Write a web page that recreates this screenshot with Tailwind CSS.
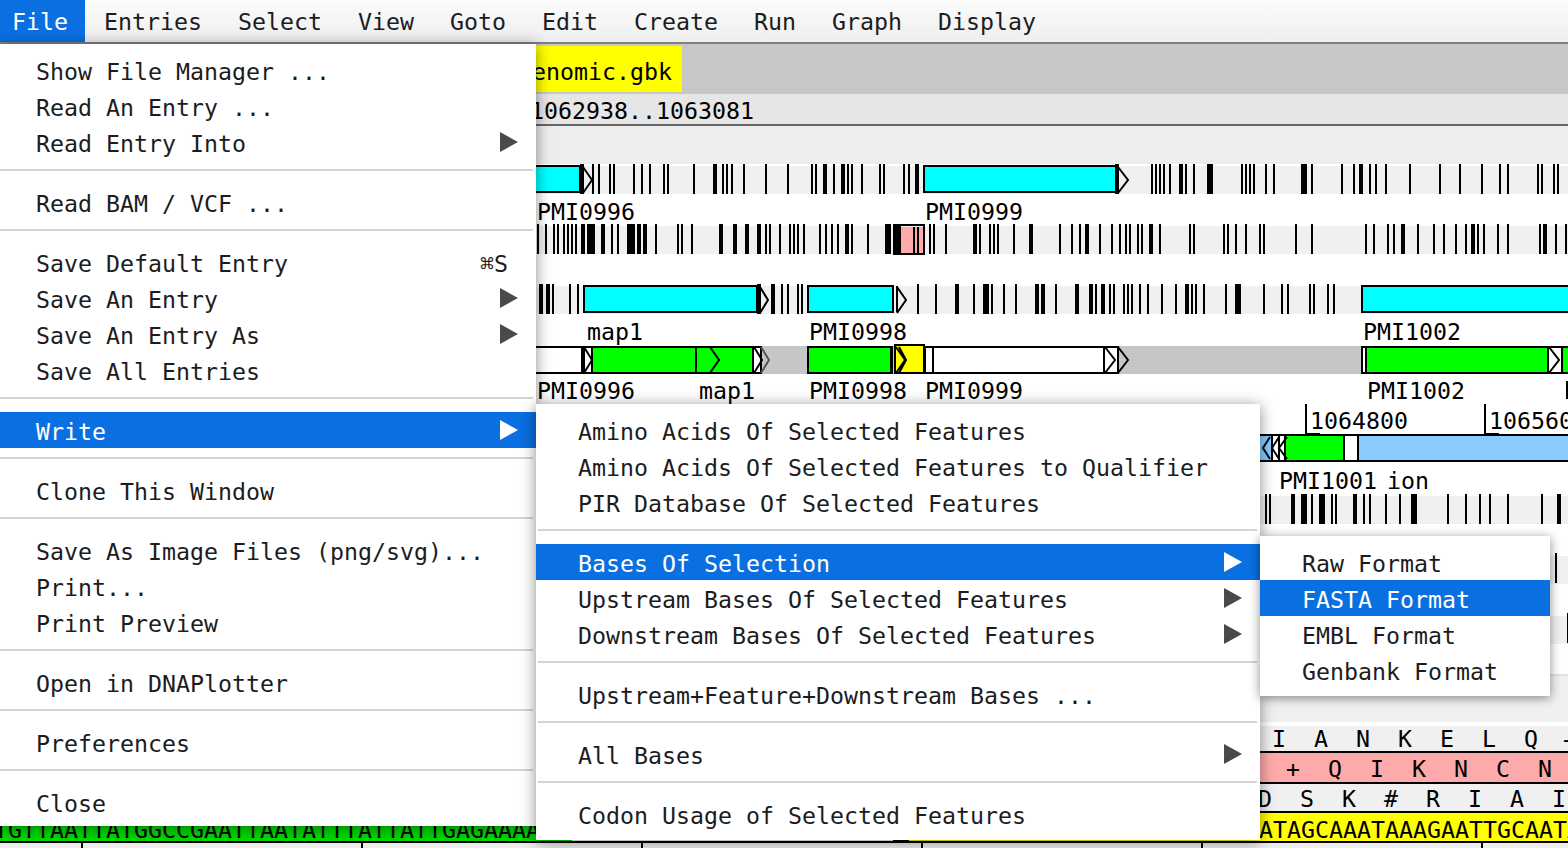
<!DOCTYPE html>
<html lang="en">
<head>
    <meta charset="UTF-8">
    <script src="https://cdn.jsdelivr.net/npm/@tailwindcss/browser@4"></script>
    <title>Artemis</title>
</head>
<body class="bg-white">
<div class="relative w-[1568px] h-[848px] overflow-hidden flex flex-col font-['DejaVu_Sans_Mono',monospace] text-[23.25px] leading-none text-[#1c1c1c]">

    <!-- Menu bar -->
    <nav class="h-[44px] shrink-0 flex border-b-2 border-[#808080] bg-gradient-to-b from-[#fcfcfc] to-[#eeeeee]">
        <div class="flex items-center pt-0.5 pl-3 pr-[17px] bg-[#0a6fe0] text-white">File</div>
        <div class="flex items-center pt-0.5 gap-9 pl-[19px]">
            <span>Entries</span><span>Select</span><span>View</span><span>Goto</span><span>Edit</span><span>Create</span><span>Run</span><span>Graph</span><span>Display</span>
        </div>
    </nav>

    <!-- Entry bar -->
    <div class="h-[50px] shrink-0 pt-0.5 bg-[#c7c7c7]">
        <div class="w-[682px] h-[46px] bg-[#ffff00] flex items-center justify-end pr-[10px] pt-1.5 text-black">genomic.gbk</div>
    </div>

    <!-- Selection info -->
    <div class="h-[32px] shrink-0 bg-[#e6e6e6] border-b-2 border-[#666666] pl-[530px] pt-[5px] text-black">1062938..1063081</div>

    <!-- Feature display -->
    <svg class="block shrink-0" width="1568" height="722" viewBox="0 126 1568 722" font-size="23.25" fill="#000">
        <rect x="0" y="126" width="1568" height="38" fill="#ededed"/>
        <rect x="0" y="166" width="1568" height="28" fill="#f0f0f0"/>
        <rect x="0" y="226" width="1568" height="28" fill="#f0f0f0"/>
        <rect x="0" y="286" width="1568" height="28" fill="#f0f0f0"/>
        <rect x="536" y="346" width="1032" height="28" fill="#c6c6c6"/>
        <rect x="1260" y="496" width="308" height="28" fill="#f0f0f0"/>
        <rect x="1260" y="556" width="308" height="28" fill="#f0f0f0"/>
        <rect x="1260" y="616" width="308" height="28" fill="#f0f0f0"/>
        <rect x="1260" y="674" width="308" height="2" fill="#e2e2e2"/>
        <rect x="1260" y="676" width="308" height="46" fill="#f0f0f0"/>
        <g id="ticks"></g>

        <!-- Forward frame features -->
        <g stroke="#000" stroke-width="2" fill="none">
            <rect x="530" y="166" width="50" height="26" fill="#00ffff"/>
            <rect x="924" y="166" width="192" height="26" fill="#00ffff"/>
            <rect x="584" y="286" width="173" height="26" fill="#00ffff"/>
            <rect x="808" y="286" width="85" height="26" fill="#00ffff"/>
            <path d="M893 286v26M897 286v26"/>
            <rect x="1362" y="286" width="210" height="26" fill="#00ffff"/>
            <path d="M581 164v30M583 164v30M1116 164v30M1118 164v30M758 284v30M760 284v30"/>
            <path d="M583 167l9 13-9 13M1118 167l10 13-10 13M760 287l8 13-8 13M897 287l9 13-9 13"/>

            <!-- Gene row -->
            <rect x="530" y="347" width="53" height="26" fill="#fff"/>
            <rect x="582" y="347" width="11" height="26" fill="#fff"/>
            <rect x="592" y="347" width="104" height="26" fill="#00ff00"/>
            <rect x="696" y="347" width="57" height="26" fill="#00ff00"/>
            <rect x="753" y="347" width="8" height="26" fill="#fff"/>
            <rect x="808" y="347" width="83" height="26" fill="#00ff00"/>
            <rect x="925" y="347" width="179" height="26" fill="#fff"/>
            <rect x="1104" y="347" width="14" height="26" fill="#fff"/>
            <rect x="1362" y="347" width="5" height="26" fill="#fff"/>
            <rect x="1366" y="347" width="182" height="26" fill="#00ff00"/>
            <rect x="1548" y="347" width="14" height="26" fill="#fff"/>
            <rect x="1562" y="347" width="10" height="26" fill="#00ff00"/>
            <path d="M584 347l8 13-8 13M710 347l9 13-9 13M754 347l8 13-8 13M1105 347l10 13-10 13M1118 347l10 13-10 13M1549 347l10 13-10 13"/>
            <path d="M761 347l8 13-8 13" stroke="#555"/>
            <path d="M583 346v28M584 346v28M933 346v28M892 346v28M895 346v28"/>

            <!-- Selected feature -->
            <rect x="895" y="345" width="29" height="28" fill="#ffff00"/>
            <path d="M896 347l9 13-9 13M899 347l7 13-7 13"/>
            <rect x="894" y="225" width="30" height="29" fill="none"/>

            <!-- Reverse frame features -->
            <path d="M1260 435H1568M1260 461H1568"/>
            <rect x="1258" y="435" width="14" height="26" fill="#88ccff"/>
            <rect x="1272" y="435" width="13" height="26" fill="#fff"/>
            <rect x="1285" y="435" width="59" height="26" fill="#00ff00"/>
            <rect x="1344" y="435" width="14" height="26" fill="#fff"/>
            <rect x="1358" y="435" width="214" height="26" fill="#88ccff"/>
            <path d="M1270 437l-7 11 7 11M1279 437l-7 11 7 11M1287 437l-8 11 8 11M1279 436v24"/>
        </g>
        <rect x="901" y="227" width="12" height="26" fill="#ffaaaa"/>
        <rect x="913" y="227" width="2" height="26"/>
        <rect x="915" y="227" width="2" height="26" fill="#ffaaaa"/>
        <rect x="917" y="227" width="2" height="26"/>
        <rect x="919" y="227" width="4" height="26" fill="#ffaaaa"/>
        <rect x="895" y="226" width="6" height="27"/>

        <!-- Labels -->
        <text y="220" x="537">PMI0996</text>
        <text y="220" x="925">PMI0999</text>
        <text y="340" x="587">map1</text>
        <text y="340" x="809">PMI0998</text>
        <text y="340" x="1363">PMI1002</text>
        <text y="399" x="537">PMI0996</text>
        <text y="399" x="699">map1</text>
        <text y="399" x="809">PMI0998</text>
        <text y="399" x="925">PMI0999</text>
        <text y="399" x="1367">PMI1002</text>
        <rect x="1566" y="381" width="2" height="18"/>
        <text y="489" x="1279">PMI1001</text>
        <text y="489" x="1387">ion</text>

        <!-- Ruler -->
        <rect x="1305" y="404" width="2" height="31"/>
        <rect x="1305" y="433" width="15" height="2"/>
        <text y="429" x="1310">1064800</text>
        <rect x="1484" y="404" width="2" height="31"/>
        <rect x="1484" y="433" width="15" height="2"/>
        <text y="429" x="1489">1065600</text>

        <rect x="1555" y="553" width="2" height="30"/>
        <rect x="1567" y="613" width="1" height="30"/>

        <!-- Sequence view -->
        <rect x="0" y="726" width="1568" height="25" fill="#f0f0f0"/>
        <rect x="0" y="751" width="1568" height="2"/>
        <rect x="0" y="753" width="1568" height="29" fill="#ffaaaa"/>
        <rect x="0" y="782" width="1568" height="2"/>
        <rect x="0" y="784" width="1568" height="27" fill="#f0f0f0"/>
        <rect x="0" y="811" width="1568" height="2"/>
        <text y="747" text-anchor="middle" x="1279 1321 1363 1405 1447 1489 1531 1567">IANKELQ-</text>
        <text y="777" text-anchor="middle" x="1293 1335 1377 1419 1461 1503 1545">+QIKNCN</text>
        <text y="807" text-anchor="middle" x="1265 1307 1349 1391 1433 1475 1517 1559">DSK#RIAI</text>
        <rect x="0" y="813" width="572" height="28" fill="#00d900"/>
        <rect x="909" y="813" width="659" height="28" fill="#ffff00"/>
        <text y="838" x="-6">TGTTAATTATGGCCGAATTAATATTTATTATTGAGAAAA</text>
        <text y="838" x="1259">ATAGCAAATAAAGAATTGCAATA</text>
        <rect x="0" y="841" width="1568" height="2"/>
        <rect x="893" y="840" width="16" height="2"/>
        <rect x="0" y="843" width="1568" height="5" fill="#eeeeee"/>
        <path d="M82 843v5M362 843v5M642 843v5M922 843v5M1202 843v5M1482 843v5" stroke="#000" stroke-width="2"/>
    </svg>

    <!-- File menu -->
    <div class="absolute left-0 top-[44px] w-[536px] h-[782px] pt-2 bg-white shadow-[0_2px_14px_rgba(0,0,0,0.45)]">
        <div class="h-9 flex items-center pt-1 pl-9">Show File Manager ...</div>
        <div class="h-9 flex items-center pt-1 pl-9">Read An Entry ...</div>
        <div class="h-9 flex items-center pt-1 justify-between pl-9 pr-[18px]">Read Entry Into
            <svg class="-mt-1" width="18" height="20" viewBox="0 0 18 20"><path d="M0 0L18 10L0 20Z" fill="#4a4a4a"/></svg>
        </div>
        <div class="h-6 pt-[9px] pr-[3px]"><div class="h-0.5 bg-[#d4d4d4]"></div></div>
        <div class="h-9 flex items-center pt-1 pl-9">Read BAM / VCF ...</div>
        <div class="h-6 pt-[9px] pr-[3px]"><div class="h-0.5 bg-[#d4d4d4]"></div></div>
        <div class="h-9 flex items-center pt-1 justify-between pl-9 pr-7">Save Default Entry<span>⌘S</span></div>
        <div class="h-9 flex items-center pt-1 justify-between pl-9 pr-[18px]">Save An Entry
            <svg class="-mt-1" width="18" height="20" viewBox="0 0 18 20"><path d="M0 0L18 10L0 20Z" fill="#4a4a4a"/></svg>
        </div>
        <div class="h-9 flex items-center pt-1 justify-between pl-9 pr-[18px]">Save An Entry As
            <svg class="-mt-1" width="18" height="20" viewBox="0 0 18 20"><path d="M0 0L18 10L0 20Z" fill="#4a4a4a"/></svg>
        </div>
        <div class="h-9 flex items-center pt-1 pl-9">Save All Entries</div>
        <div class="h-6 pt-[9px] pr-[3px]"><div class="h-0.5 bg-[#d4d4d4]"></div></div>
        <div class="h-9 flex items-center pt-1 justify-between pl-9 pr-[18px] bg-[#0a6fe0] text-white">Write
            <svg class="-mt-1" width="18" height="20" viewBox="0 0 18 20"><path d="M0 0L18 10L0 20Z" fill="#fff"/></svg>
        </div>
        <div class="h-6 pt-[9px] pr-[3px]"><div class="h-0.5 bg-[#d4d4d4]"></div></div>
        <div class="h-9 flex items-center pt-1 pl-9">Clone This Window</div>
        <div class="h-6 pt-[9px] pr-[3px]"><div class="h-0.5 bg-[#d4d4d4]"></div></div>
        <div class="h-9 flex items-center pt-1 pl-9">Save As Image Files (png/svg)...</div>
        <div class="h-9 flex items-center pt-1 pl-9">Print...</div>
        <div class="h-9 flex items-center pt-1 pl-9">Print Preview</div>
        <div class="h-6 pt-[9px] pr-[3px]"><div class="h-0.5 bg-[#d4d4d4]"></div></div>
        <div class="h-9 flex items-center pt-1 pl-9">Open in DNAPlotter</div>
        <div class="h-6 pt-[9px] pr-[3px]"><div class="h-0.5 bg-[#d4d4d4]"></div></div>
        <div class="h-9 flex items-center pt-1 pl-9">Preferences</div>
        <div class="h-6 pt-[9px] pr-[3px]"><div class="h-0.5 bg-[#d4d4d4]"></div></div>
        <div class="h-9 flex items-center pt-1 pl-9">Close</div>
    </div>

    <!-- Write submenu -->
    <div class="absolute left-[536px] top-[404px] w-[724px] h-[436px] pt-2 bg-white shadow-[0_2px_14px_rgba(0,0,0,0.45)]">
        <div class="h-9 flex items-center pt-1 pl-[42px]">Amino Acids Of Selected Features</div>
        <div class="h-9 flex items-center pt-1 pl-[42px]">Amino Acids Of Selected Features to Qualifier</div>
        <div class="h-9 flex items-center pt-1 pl-[42px]">PIR Database Of Selected Features</div>
        <div class="h-6 pt-[9px] pl-0.5 pr-[3px]"><div class="h-0.5 bg-[#d4d4d4]"></div></div>
        <div class="h-9 flex items-center pt-1 justify-between pl-[42px] pr-[18px] bg-[#0a6fe0] text-white">Bases Of Selection
            <svg class="-mt-1" width="18" height="20" viewBox="0 0 18 20"><path d="M0 0L18 10L0 20Z" fill="#fff"/></svg>
        </div>
        <div class="h-9 flex items-center pt-1 justify-between pl-[42px] pr-[18px]">Upstream Bases Of Selected Features
            <svg class="-mt-1" width="18" height="20" viewBox="0 0 18 20"><path d="M0 0L18 10L0 20Z" fill="#4a4a4a"/></svg>
        </div>
        <div class="h-9 flex items-center pt-1 justify-between pl-[42px] pr-[18px]">Downstream Bases Of Selected Features
            <svg class="-mt-1" width="18" height="20" viewBox="0 0 18 20"><path d="M0 0L18 10L0 20Z" fill="#4a4a4a"/></svg>
        </div>
        <div class="h-6 pt-[9px] pl-0.5 pr-[3px]"><div class="h-0.5 bg-[#d4d4d4]"></div></div>
        <div class="h-9 flex items-center pt-1 pl-[42px]">Upstream+Feature+Downstream Bases ...</div>
        <div class="h-6 pt-[9px] pl-0.5 pr-[3px]"><div class="h-0.5 bg-[#d4d4d4]"></div></div>
        <div class="h-9 flex items-center pt-1 justify-between pl-[42px] pr-[18px]">All Bases
            <svg class="-mt-1" width="18" height="20" viewBox="0 0 18 20"><path d="M0 0L18 10L0 20Z" fill="#4a4a4a"/></svg>
        </div>
        <div class="h-6 pt-[9px] pl-0.5 pr-[3px]"><div class="h-0.5 bg-[#d4d4d4]"></div></div>
        <div class="h-9 flex items-center pt-1 pl-[42px]">Codon Usage of Selected Features</div>
    </div>

    <!-- Format submenu -->
    <div class="absolute left-[1260px] top-[536px] w-[290px] h-[160px] pt-2 bg-white shadow-[0_2px_10px_rgba(0,0,0,0.45)]">
        <div class="h-9 flex items-center pt-1 pl-[42px]">Raw Format</div>
        <div class="h-9 flex items-center pt-1 pl-[42px] bg-[#0a6fe0] text-white">FASTA Format</div>
        <div class="h-9 flex items-center pt-1 pl-[42px]">EMBL Format</div>
        <div class="h-9 flex items-center pt-1 pl-[42px]">Genbank Format</div>
    </div>
</div>

<script>
    // stop codon marks per frame line: "x" or "x/width"
    const rows = [
        [164, "592 598 609 613 633 641 649 663 667 693 713/4 722 726 731 743 765 787 811 815 823/4 833 841/4 847 851 861 879 883 903 908 915/4 1151 1155 1159 1163 1169 1179/4 1185 1193 1207/6 1241 1245 1249 1253 1265 1273 1301/6 1311 1341 1353 1359/4 1369 1375 1385 1409 1439 1459 1481 1499 1507 1537 1541 1553 1557"],
        [224, "537 545 553 557 563 567 571 575 581/4 587/8 601/4 611 617 627/8 637/4 643/4 655 677 681 691 719/4 733/4 745/4 757/4 765 769 779 789 793 797 803 819 825 831 837 845/4 851 867 885/6 929 933 945 973/4 979 989 993 997 1013 1029/4 1059 1071 1079 1085/4 1099 1111 1119 1125 1129 1137 1141 1149/4 1159 1189 1193 1223 1227 1235 1245 1259 1263 1295 1311 1365 1373 1387 1393 1401/4 1417 1433 1443 1455 1465 1471/4 1477 1483 1497 1507 1539 1543/4 1555 1565"],
        [284, "539/4 546/4 552 569 577 771/4 781 787 797 801 917 935 955/4 973 983/6 991 1003 1015 1035/4 1041/4 1055 1075/4 1089/4 1095 1101/4 1109 1113 1123 1127 1131 1139 1147 1161 1175 1185/4 1191 1195 1203 1225 1235/6 1263 1281 1287 1309 1313 1327 1333"],
        [494, "1265 1269 1291/4 1301/6 1311 1319/6 1331 1335 1353/4 1363 1369 1385 1399 1411/6 1447 1465 1479 1489 1507 1541 1557/4"]
    ];
    let marks = "";
    for (const [y, list] of rows) {
        for (const item of list.split(" ")) {
            const [x, w] = item.split("/");
            marks += `<rect x="${x}" y="${y}" width="${w || 2}" height="30"/>`;
        }
    }
    document.getElementById("ticks").innerHTML = marks;
</script>
</body>
</html>
